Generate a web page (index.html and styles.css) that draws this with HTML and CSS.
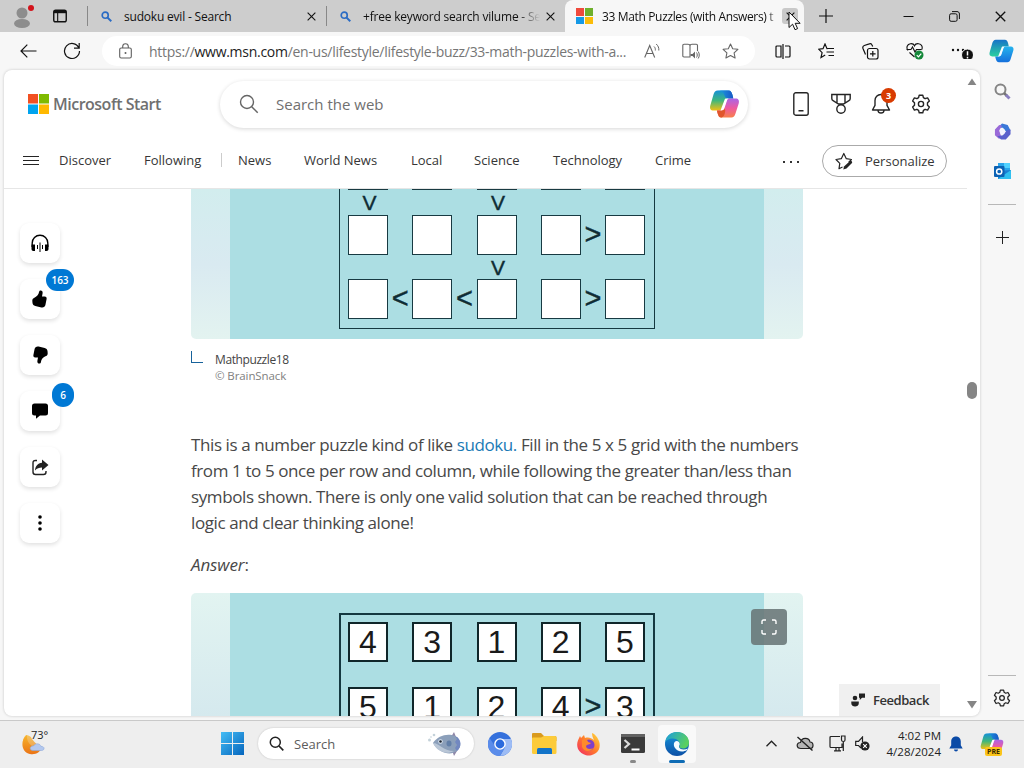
FILE: index.html
```html
<!DOCTYPE html>
<html lang="en">
<head>
    <meta charset="UTF-8">
    <meta name="viewport" content="width=device-width, initial-scale=1.0">
    <title>33 Math Puzzles (with Answers)</title>
    <link rel="stylesheet" href="styles.css">
</head>
<body>

    <svg width="0" height="0" class="defs">
        <defs>
            <linearGradient id="cpTop" x1="0" y1="0" x2="1" y2="0"><stop offset="0" stop-color="#1aa6e0"/><stop offset="1" stop-color="#1a55c8"/></linearGradient>
            <linearGradient id="cpLeft" x1="0" y1="0" x2="0" y2="1"><stop offset="0" stop-color="#1590d8"/><stop offset=".5" stop-color="#3fb77c"/><stop offset="1" stop-color="#f2c014"/></linearGradient>
            <linearGradient id="cpRight" x1="0" y1="0" x2="0" y2="1"><stop offset="0" stop-color="#a965e8"/><stop offset=".5" stop-color="#ee5aa0"/><stop offset="1" stop-color="#f8804a"/></linearGradient>
            <linearGradient id="cbLeft" x1="0" y1="0" x2="0" y2="1"><stop offset="0" stop-color="#1672c8"/><stop offset="1" stop-color="#2bd0a0"/></linearGradient>
            <linearGradient id="cbRight" x1="0" y1="0" x2="0" y2="1"><stop offset="0" stop-color="#25b4ee"/><stop offset="1" stop-color="#1570dc"/></linearGradient>
            <linearGradient id="win" x1="0" y1="0" x2="1" y2="1"><stop offset="0" stop-color="#45bdf5"/><stop offset="1" stop-color="#0565bd"/></linearGradient>
            <linearGradient id="edgeA" x1="0" y1="0" x2="1" y2=".4"><stop offset="0" stop-color="#1a9ce0"/><stop offset="1" stop-color="#5ad060"/></linearGradient>
            <linearGradient id="edgeB" x1="0" y1="0" x2="0" y2="1"><stop offset="0" stop-color="#1697dd"/><stop offset="1" stop-color="#0c4fa5"/></linearGradient>
            <linearGradient id="fox" x1="1" y1="0" x2="0" y2="1"><stop offset="0" stop-color="#ffe03c"/><stop offset=".5" stop-color="#ff7a2c"/><stop offset="1" stop-color="#f0246a"/></linearGradient>
            <linearGradient id="moon" x1="0" y1="0" x2="0" y2="1"><stop offset="0" stop-color="#f8b62c"/><stop offset="1" stop-color="#ea7416"/></linearGradient>
            <symbol id="copilot" viewBox="0 0 30 28">
                <path d="M8 .5h11c2.500 0 3 1.500 4 4.500l.8 3.500H19c-2 0-3 1-3.600 3L13 18.500c-.6 1.500-1.500 2-3 2H4c-3 0-4-2-3.200-5L4 4.500c.8-2.500 2-4 4-4z" fill="url(#cpLeft)"/>
                <path d="M8 .5h11c2.500 0 3 1.500 4 4.500l.8 3.500H19c-2.500 0-3.500-1-4.200-3.500C14 2 12 .5 8 .5z" fill="url(#cpTop)"/>
                <path d="M22 27.500H12c-2.500 0-3-1.500-4-4.500l-.6-2.500H11c2 0 3-1 3.600-3L17 10.500c.6-1.500 1.500-2 3-2h6c3 0 4 2 3.200 5L26 23.500c-.8 2.500-2 4-4 4z" fill="url(#cpRight)"/>
                <path d="M7.400 20.500H11c2 0 3-1 3.600-3l1.200 3c-.5 5-2.500 7-4 7-2.300 0-2.800-1.500-3.800-4.500z" fill="#e0562c"/>
                <path d="M16.500 8.500h4c-2 0-2.500.5-3 2l-2.500 7.500c-.6 1.800-1.500 2.500-3.500 2.500H11l4-10.500c.3-1 .7-1.500 1.500-1.500z" fill="#fff"/>
            </symbol>
            <symbol id="copilotBlue" viewBox="0 0 30 28">
                <path d="M8 .5h11c2.500 0 3 1.500 4 4.500l.8 3.500H19c-2 0-3 1-3.600 3L13 18.500c-.6 1.500-1.500 2-3 2H4c-3 0-4-2-3.200-5L4 4.500c.8-2.500 2-4 4-4z" fill="url(#cbLeft)"/>
                <path d="M22 27.500H12c-2.500 0-3-1.500-4-4.500l-.6-2.500H11c2 0 3-1 3.600-3L17 10.500c.6-1.500 1.500-2 3-2h6c3 0 4 2 3.200 5L26 23.500c-.8 2.500-2 4-4 4z" fill="url(#cbRight)"/>
                <path d="M16.500 8.500h4c-2 0-2.500.5-3 2l-2.500 7.500c-.6 1.800-1.500 2.500-3.500 2.500H11l4-10.500c.3-1 .7-1.500 1.500-1.500z" fill="#f4fbff"/>
            </symbol>
            <symbol id="lens" viewBox="0 0 12 12"><circle cx="4.600" cy="4.600" r="3.300" fill="none" stroke="#2b6cc4" stroke-width="1.800"/><path d="M7.200 7.200l4 4" stroke="#2b6cc4" stroke-width="2.200"/></symbol>
            <symbol id="x" viewBox="0 0 10 10"><path d="M.7.7l8.600 8.600M9.300.7L.7 9.300" stroke="#111" stroke-width="1.200"/></symbol>
            <symbol id="gear" viewBox="0 0 20 20">
                <path d="M8.200 1.200h3.600l.6 2.500 1.700 1 2.500-.8 1.800 3.100-1.900 1.800v2.400l1.900 1.800-1.800 3.100-2.500-.8-1.700 1-.6 2.500H8.200l-.6-2.500-1.700-1-2.500.8L1.600 13l1.900-1.800V8.800L1.600 7l1.800-3.100 2.500.8 1.700-1z" fill="none" stroke="currentColor" stroke-width="1.400" stroke-linejoin="round"/>
                <circle cx="10" cy="10" r="2.600" fill="none" stroke="currentColor" stroke-width="1.400"/>
            </symbol>
            <symbol id="thumb" viewBox="0 0 16 18"><path d="M8.600.4c1.600 0 2.300 1.200 2 2.900L10 6.500h2.700c1.500 0 2.200 1 1.900 2.500l-1.200 6c-.4 1.900-2 2.800-4 2.400L3.300 16C1.700 15.600.7 14.600.5 13L.3 10.800c0-1.500.5-2.400 1.700-2.900 2.800-1.200 4.600-3 5.200-6.300C7.300.9 7.800.4 8.600.4z"/></symbol>
        </defs>
    </svg>

    <!-- Tab strip -->
    <div class="tabstrip">
        <div class="strip-left">
            <svg class="profile" width="22" height="28" viewBox="0 0 22 28"><circle cx="9" cy="11" r="5.500" fill="#8d8d8d"/><ellipse cx="9" cy="21.500" rx="8" ry="4.500" fill="#8d8d8d"/><circle cx="18" cy="6" r="3" fill="#d3141c"/></svg>
            <svg width="14" height="14" viewBox="0 0 15 14"><rect x=".8" y=".8" width="13.400" height="12.400" rx="2" fill="none" stroke="#111" stroke-width="1.500"/><path d="M1 1h13v3H1z" fill="#111"/><path d="M5 3v10" stroke="#111" stroke-width="1.200"/></svg>
        </div>
        <div class="tab tab-one">
            <svg class="tab-icon" width="11" height="11"><use href="#lens"/></svg>
            <span class="tab-title">sudoku evil - Search</span>
            <svg width="9" height="9"><use href="#x"/></svg>
        </div>
        <div class="tab tab-two">
            <svg class="tab-icon" width="11" height="11"><use href="#lens"/></svg>
            <span class="tab-title fade">+free keyword search vilume - Se</span>
            <svg width="9" height="9"><use href="#x"/></svg>
        </div>
        <div class="tab active">
            <svg width="17" height="16" viewBox="0 0 17 16"><path d="M0 0h8v8H0z" fill="#ef4a3c"/><path d="M9 0h8v8H9z" fill="#6fb02c"/><path d="M0 9h8v7H0z" fill="#1599e6"/><path d="M9 9h8v7H9z" fill="#fbbc09"/></svg>
            <span class="tab-title fade">33 Math Puzzles (with Answers) t</span>
            <span class="close-hover"><svg width="9" height="9"><use href="#x"/></svg></span>
        </div>
        <svg class="new-tab" width="14" height="14" viewBox="0 0 14 14"><path d="M7 0v14M0 7h14" stroke="#111" stroke-width="1.200"/></svg>
        <div class="window-buttons">
            <svg width="11" height="11" viewBox="0 0 11 11"><path d="M.5 5.500h10" stroke="#111"/></svg>
            <svg width="11" height="11" viewBox="0 0 11 11"><rect x=".6" y="2.800" width="7.500" height="7.500" rx="1.500" fill="none" stroke="#111"/><path d="M3 .6h5c1.500 0 2.400.9 2.400 2.400v5" fill="none" stroke="#111"/></svg>
            <svg width="11" height="11"><use href="#x"/></svg>
        </div>
    </div>

    <!-- Toolbar -->
    <div class="toolbar">
        <svg class="back" width="17" height="14" viewBox="0 0 17 14"><path d="M16.500 7H1M7.300.7L1 7l6.300 6.300" fill="none" stroke="#111" stroke-width="1.200"/></svg>
        <svg class="reload" width="18" height="18" viewBox="0 0 18 18"><path d="M15.800 5.800A7.500 7.500 0 1 0 16.500 9M16.200 1v5.200H11" fill="none" stroke="#111" stroke-width="1.200"/></svg>
        <div class="address">
            <svg class="lock" width="13" height="16" viewBox="0 0 13 16"><rect x=".7" y="5" width="11.600" height="10" rx="1.500" fill="none" stroke="#5f5f5f" stroke-width="1.100"/><path d="M3.700 5V3.500a2.800 2.800 0 0 1 5.600 0V5" fill="none" stroke="#5f5f5f" stroke-width="1.100"/><circle cx="6.500" cy="10" r="1" fill="#5f5f5f"/></svg>
            <span class="url">https://<b>www.msn.com</b>/en-us/lifestyle/lifestyle-buzz/33-math-puzzles-with-a...</span>
            <svg width="16" height="16" viewBox="0 0 16 16"><path d="M.7 14.500L5.700 2.500l5 12M2.400 10.500H9" fill="none" stroke="#666" stroke-width="1.100"/><path d="M10 3.500c1.200 1 1.500 2.500 1.300 4M12.200 1c2 1.800 2.900 4 2.600 6.500" fill="none" stroke="#666"/></svg>
            <svg width="18" height="16" viewBox="0 0 18 16"><path d="M8 14H2c-.8 0-1.200-.4-1.200-1.200V2.500c0-.8.4-1.200 1.200-1.200h4c1.200 0 2 .6 2 1.700V14zM8 3c0-1.100.8-1.700 2-1.700h4.300c.8 0 1.200.4 1.200 1.200V8" fill="none" stroke="#666" stroke-width="1.100"/><path d="M8.500 11h2l2.500-2.500v7L10.500 13h-2z" fill="#666"/><path d="M14.500 9.500c1 1.500 1 3.500 0 5M16.200 8.500c1.400 2 1.400 5 0 7" fill="none" stroke="#666"/></svg>
            <svg width="17" height="16" viewBox="0 0 17 16"><path d="M8.500 1l2.200 4.700 5.200.6-3.800 3.600 1 5.100-4.600-2.500L3.900 15l1-5.100L1.100 6.300l5.200-.6z" fill="none" stroke="#666" stroke-width="1.100" stroke-linejoin="round"/></svg>
        </div>
        <div class="tools">
            <svg width="16" height="15" viewBox="0 0 16 15"><path d="M6 2H2Q1 2 1 3v9q0 1 1 1h4zM10 2h4q1 0 1 1v9q0 1-1 1h-4M8 0v15" fill="none" stroke="#111" stroke-width="1.200"/></svg>
            <svg width="17" height="16" viewBox="0 0 17 16"><path d="M9.500 5.700H9L7 1 5 5.700l-4.300.5 3.400 3.400L3 14.500l4.200-2.400M9.500 5.500H16M8.500 9H16M10.500 12.500H16" fill="none" stroke="#111" stroke-width="1.200"/></svg>
            <svg width="17" height="17" viewBox="0 0 17 17"><rect x="5.500" y="5.500" width="10.500" height="10.500" rx="2" fill="none" stroke="#111" stroke-width="1.200"/><path d="M3.500 11.500L1 5.500C.5 4 1 3 2.300 2.500l5-1.600c1.300-.5 2.300 0 2.700 1l.7 1.600M10.800 8v5.600M8 10.800h5.600" fill="none" stroke="#111" stroke-width="1.200"/></svg>
            <svg width="18" height="18" viewBox="0 0 18 18"><path d="M2 8.500C0 6 1 2 4.500 1.700 6.500 1.500 8 2.500 8.500 3.800 9 2.500 10.500 1.500 12.500 1.700 16 2 17 5.500 15.500 8M3.500 10.500l5 4.500M.5 7.500H5l1.500-2.500L9 10l1.500-2.500H15" fill="none" stroke="#111" stroke-width="1.100"/><circle cx="13" cy="13" r="4.500" fill="#15883a"/><path d="M10.800 13.200l1.600 1.600 2.900-3.200" fill="none" stroke="#fff" stroke-width="1.200"/></svg>
            <svg width="22" height="16" viewBox="0 0 22 16"><g fill="#111"><circle cx="2" cy="7" r="1.200"/><circle cx="7" cy="7" r="1.200"/><circle cx="12" cy="7" r="1.200"/></g><circle cx="16.500" cy="12" r="6" fill="#111" stroke="#f7f7f7"/><path d="M16.500 8.300v4.200M16.500 13.800v1.600" stroke="#fff" stroke-width="1.500"/></svg>
        </div>
        <svg class="copilot-btn" width="25" height="24"><use href="#copilotBlue"/></svg>
    </div>

    <div class="main">
        <!-- Page -->
        <div class="page">
            <header class="header">
                <div class="header-top">
                    <div class="logo">
                        <svg width="21" height="20" viewBox="0 0 21 20"><path d="M0 0h10v9.500H0z" fill="#f25022"/><path d="M11 0h10v9.500H11z" fill="#7fba00"/><path d="M0 10.500h10V20H0z" fill="#00a4ef"/><path d="M11 10.500h10V20H11z" fill="#ffb900"/></svg>
                        <span>Microsoft Start</span>
                    </div>
                    <div class="search">
                        <svg width="20" height="20" viewBox="0 0 20 20"><circle cx="8" cy="8" r="6.500" fill="none" stroke="#666" stroke-width="1.400"/><path d="M12.700 12.700l6 6" stroke="#666" stroke-width="1.500"/></svg>
                        <span>Search the web</span>
                        <svg width="31" height="28"><use href="#copilot"/></svg>
                    </div>
                    <div class="header-icons">
                        <svg width="16" height="24" viewBox="0 0 16 24"><rect x=".8" y=".8" width="14.400" height="22.400" rx="2" fill="none" stroke="#242424" stroke-width="1.400"/><path d="M5.500 18.800h5" stroke="#242424" stroke-width="1.400"/></svg>
                        <svg width="20" height="22" viewBox="0 0 20 22"><path d="M.8 1.500h18.400v4c0 1-.4 1.700-1.300 2.200L12.500 11h-5L2.100 7.700C1.200 7.200.8 6.500.8 5.500zM6 1.500v8M14 1.500v8" fill="none" stroke="#242424" stroke-width="1.400"/><circle cx="10" cy="16" r="4.200" fill="none" stroke="#242424" stroke-width="1.400"/></svg>
                        <div class="bell">
                            <svg width="20" height="22" viewBox="0 0 20 22"><path d="M10 1.500c-3.600 0-6 2.600-6 6v4.800L1.500 17h17L16 12.300V7.500c0-3.400-2.400-6-6-6zM7 17.500c.4 3.400 5.600 3.400 6 0" fill="none" stroke="#242424" stroke-width="1.400" stroke-linejoin="round"/></svg>
                            <span class="bell-count">3</span>
                        </div>
                        <svg width="20" height="20"><use href="#gear"/></svg>
                    </div>
                </div>
                <nav class="nav">
                    <svg width="16" height="10" viewBox="0 0 16 10"><path d="M0 .5h16M0 4.500h16M0 8.500h16" stroke="#242424"/></svg>
                    <a class="n-discover">Discover</a>
                    <a class="n-following">Following</a>
                    <a class="n-news">News</a>
                    <a class="n-world">World News</a>
                    <a class="n-local">Local</a>
                    <a class="n-science">Science</a>
                    <a class="n-tech">Technology</a>
                    <a class="n-crime">Crime</a>
                    <svg class="more" width="16" height="4" viewBox="0 0 16 4"><path d="M0 2h2v2H0zM7 2h2v2H7zM14 2h2v2h-2z" fill="#333"/></svg>
                    <div class="personalize">
                        <svg width="19" height="18" viewBox="0 0 19 18"><path d="M7.500 15L4 16.700l.8-5.300L1 7.500l5.300-.8L8.800 1.500l2.500 5.200 5.200.8-2.800 2.700" fill="none" stroke="#242424" stroke-width="1.200" stroke-linejoin="round"/><path d="M9 14.500l6-5.500c1-.8 2.800.8 2 2l-5.500 5.500-3.200 1z" fill="#242424"/></svg>
                        <span>Personalize</span>
                    </div>
                </nav>
            </header>

            <div class="content">
                <div class="actions">
                    <div class="action"><svg width="18" height="18" viewBox="0 0 18 18"><path d="M1.200 13V9a7.800 7.800 0 0 1 15.600 0v4" fill="none" stroke="#000" stroke-width="1.400"/><path d="M.5 10.500H4V17H2.500C1.200 17 .5 16.300.5 15zM17.500 10.500H14V17h1.500c1.300 0 2-.7 2-2zM6 11h1v4H6zM8.500 8.500h1V18h-1zM11 11h1v4h-1z"/></svg></div>
                    <div class="action"><svg width="16" height="18"><use href="#thumb"/></svg><span class="badge">163</span></div>
                    <div class="action"><svg class="down" width="16" height="18"><use href="#thumb"/></svg></div>
                    <div class="action"><svg width="16" height="16" viewBox="0 0 16 16"><path d="M2.500.5h11A2.500 2.500 0 0 1 16 3v7a2.500 2.500 0 0 1-2.500 2.500H8L4 15.800v-3.300H2.500A2.500 2.500 0 0 1 0 10V3A2.500 2.500 0 0 1 2.500.500z"/></svg><span class="badge round">6</span></div>
                    <div class="action"><svg width="18" height="17" viewBox="0 0 18 17"><path d="M6 1.500H4.500Q2 1.500 2 4v9q0 2.500 2.500 2.500h8Q15 15.500 15 13v-1" fill="none" stroke="#222" stroke-width="1.400"/><path d="M11 .5L17.500 6 11 11.500V8.500c-3 0-5 .7-7 3 .3-4.300 2.700-7.500 7-7.800z" fill="#222"/></svg></div>
                    <div class="action"><svg width="4" height="16" viewBox="0 0 4 16"><circle cx="2" cy="2" r="1.800"/><circle cx="2" cy="8" r="1.800"/><circle cx="2" cy="14" r="1.800"/></svg></div>
                </div>

                <article class="article">
                    <figure class="picture picture-one">
                        <div class="picture-inner">
                            <div class="puzzle">
                                <i></i><i></i><i></i><i></i><i></i>
                                <b class="v c1">V</b><b class="v c3">V</b>
                                <i></i><i></i><i></i><i></i><i></i>
                                <b class="v c3 r4">V</b>
                                <i></i><i></i><i></i><i></i><i></i>
                                <b class="g1">&gt;</b><b class="l1">&lt;</b><b class="l2">&lt;</b><b class="g2">&gt;</b>
                            </div>
                        </div>
                    </figure>
                    <div class="caption">
                        <span class="corner"></span>
                        <div>
                            <p class="caption-title">Mathpuzzle18</p>
                            <p class="caption-credit">© BrainSnack</p>
                        </div>
                    </div>
                    <p class="text">This is a number puzzle kind of like <a>sudoku.</a> Fill in the 5 x 5 grid with the numbers<br>from 1 to 5 once per row and column, while following the greater than/less than<br>symbols shown. There is only one valid solution that can be reached through<br>logic and clear thinking alone!</p>
                    <p class="text answer"><em>Answer</em>:</p>
                    <figure class="picture picture-two">
                        <div class="picture-inner">
                            <div class="puzzle solved">
                                <i>4</i><i>3</i><i>1</i><i>2</i><i>5</i>
                                <i>5</i><i>1</i><i>2</i><i>4</i><b class="g1">&gt;</b><i>3</i>
                            </div>
                        </div>
                        <span class="expand"><svg width="16" height="16" viewBox="0 0 16 16"><path d="M1 5V2.500Q1 1 2.500 1H5M11 1h2.500Q15 1 15 2.500V5M15 11v2.500q0 1.500-1.500 1.500H11M5 15H2.500Q1 15 1 13.500V11" fill="none" stroke="#fff" stroke-width="1.400"/></svg></span>
                    </figure>
                </article>
            </div>

            <div class="scrollbar">
                <svg width="10" height="7" viewBox="0 0 10 8"><path d="M5 .5L10 8H0z" fill="#858585"/></svg>
                <span class="thumb"></span>
                <svg width="10" height="8" viewBox="0 0 10 8"><path d="M5 7.500L0 0h10z" fill="#858585"/></svg>
            </div>

            <div class="feedback">
                <svg width="14" height="14" viewBox="0 0 14 14" fill="#222"><circle cx="4" cy="5" r="2.300"/><path d="M.3 8.500h7.500v1.700c0 4.400-7.500 4.400-7.500 0zM8 .5h6v4.300h-3L8.800 7V4.800H8z"/></svg>
                <span>Feedback</span>
            </div>
        </div>

        <!-- Sidebar -->
        <aside class="sidebar">
            <svg width="17" height="17" viewBox="0 0 17 17"><circle cx="6.500" cy="6.500" r="5" fill="none" stroke="#858585" stroke-width="2"/><path d="M10 10l3 3" stroke="#777" stroke-width="2.500"/><path d="M12 12l3.500 3.500" stroke="#8a7fc0" stroke-width="3"/></svg>
            <svg width="17" height="17" viewBox="0 0 17 18"><path d="M8 .5l6 1.500 3 6-4 2-4-5H5L1.500 7z" fill="#3a78d8"/><path d="M5 2L.5 7v6L5 17l2-3-2-6 3-5z" fill="#9a6ad8"/><path d="M3 14l6-1 4-5 4-1v5l-5 5.500H7z" fill="#5a60cc"/><circle cx="8.500" cy="9" r="2.800" fill="#f3f3ff"/></svg>
            <svg width="17" height="17" viewBox="0 0 17 17"><path d="M4 0h12v9H4z" fill="#2aa4ea"/><path d="M10 0h6v5h-6z" fill="#50d2ff"/><path d="M4 8l13-1v9H4z" fill="#1a7fd2"/><path d="M4 16L17 7v9z" fill="#2fc0f0"/><rect y="3" width="10.500" height="11" rx="1" fill="#0b62b4"/><circle cx="5.200" cy="8.500" r="2.600" fill="none" stroke="#fff" stroke-width="1.500"/></svg>
            <span class="side-line"></span>
            <svg width="13" height="13" viewBox="0 0 13 13"><path d="M6.500 0v13M0 6.500h13" stroke="#222"/></svg>
            <div class="side-bottom">
                <span class="side-line"></span>
                <svg width="18" height="18"><use href="#gear"/></svg>
            </div>
        </aside>
    </div>

    <!-- Taskbar -->
    <footer class="taskbar">
        <div class="weather">
            <svg width="26" height="24" viewBox="0 0 26 24"><path d="M6 3C-1 8 0 20 9 22c6 1 10-2 11.500-6C13 17 5 12 6 3z" fill="url(#moon)"/><path d="M5 3c2 0 5 1 6 4 3 4 6 6 8 8-1 4-5 7-9 7C2 20-1 9 5 3z" fill="url(#moon)" opacity=".75"/><path d="M12 18.500c-4 0-3.500-5 .5-4.500 2-3.500 7-2.500 7.500.5 4-.5 4 4 .5 4z" fill="#b4c8ee" stroke="#8da7dc" stroke-width=".6"/></svg>
            <span>73°</span>
        </div>
        <div class="task-center">
            <svg width="23" height="23" viewBox="0 0 23 23"><path d="M0 0h11v11H0zM12 0h11v11H12zM0 12h11v11H0zM12 12h11v11H12z" fill="url(#win)"/></svg>
            <div class="task-search">
                <svg width="15" height="15" viewBox="0 0 15 15"><circle cx="6.300" cy="6.300" r="5" fill="none" stroke="#222" stroke-width="1.500"/><path d="M10 10l4.300 4.300" stroke="#222" stroke-width="1.700"/></svg>
                <span>Search</span>
                <svg width="35" height="24" viewBox="0 0 35 24"><path d="M23 5l3-5 2 5 1 5zM24 18l2 6 3-5 1-4z" fill="#8f87a8"/><path d="M5 11C10 3 20 1 27 4c6 3 7 11 2 15-7 5-18 2-24-8z" fill="#8b9fba"/><path d="M5 11c6 0 10 8 21 8-7 4-17 1-21-8z" fill="#b9c6d6"/><path d="M27 4c7 3 7 11 2 15l-2-3 2-3-2-3 2-3z" fill="#7288c0"/><circle cx="12.500" cy="9.500" r="2.200" fill="#dfe8f2"/><circle cx="12.500" cy="9.500" r="1.300" fill="#1c2430"/><ellipse cx="21" cy="11.500" rx="2.500" ry="3" fill="#627fa8"/><g fill="#c4d2da"><circle cx="1.500" cy="8" r="1.500"/><circle cx="6" cy="3" r="1.300"/><circle cx="3" cy="5" r=".8"/></g></svg>
            </div>
            <svg class="app chromium" width="24" height="24" viewBox="0 0 24 24"><circle cx="12" cy="12" r="12" fill="#3470dc"/><path d="M12 7h11A12 12 0 0 1 12 24l5-9z" fill="#9dbcf5"/><path d="M1.500 6A12 12 0 0 0 12 24l4.500-7.500L7 14z" fill="#5a8cea"/><circle cx="12" cy="12" r="5.800" fill="#fff"/><circle cx="12" cy="12" r="4.400" fill="#2c6bdd"/></svg>
            <svg class="app" width="25" height="22" viewBox="0 0 25 22"><path d="M1 0h8l3 3h11q1.500 0 1.500 1.500V8H0V1q0-1 1-1z" fill="#d99a1e"/><path d="M1 4.500h8L12 3h11q1.500 0 1.500 1.500v15Q24.500 21 23 21H1.500Q0 21 0 19.500v-14q0-1 1-1z" fill="#fccb3a"/><path d="M5 21v-4.500Q5 15 6.500 15h12q1.500 0 1.500 1.500V21z" fill="#1273c8"/></svg>
            <svg class="app firefox" width="24" height="24" viewBox="0 0 24 24"><path d="M15 1c3 1 5 4 6 6 3 5 2 11-2 14a12 12 0 0 1-18-4C-1 12 1 8 3 4l1 2 3-3 1 3c4-1 6 0 9 2-1-2-2-4-2-7z" fill="url(#fox)"/><circle cx="12" cy="13" r="5.500" fill="#8040c8"/><path d="M5 8c3-2 6 0 6 2l3 1c-1 2-4 1-5 3 0 3 4 4 7 2-2 4-9 4-11-1z" fill="#ff8a2a"/></svg>
            <div class="app terminal">
                <svg width="24" height="19" viewBox="0 0 24 19"><rect width="24" height="19" rx="1.500" fill="#3a3a3a"/><path d="M0 0h24v3H0z" fill="#626262"/><path d="M3.500 6l4.500 4-4.500 4" fill="none" stroke="#ddd" stroke-width="2.200"/><path d="M10.500 15.500h8" stroke="#fff" stroke-width="2"/></svg>
                <span></span>
            </div>
            <div class="app edge">
                <svg width="24" height="24" viewBox="0 0 24 24"><circle cx="12" cy="12" r="12" fill="url(#edgeB)"/><path d="M.3 10C1 4 6 0 12 0c7 0 12 5 12 10.500 0 4-3 6-6 6-2.500 0-4-1-3.500-2.500C16 10 12 6.500 8 6.500 4 6.500 1 8.500.3 10z" fill="url(#edgeA)"/><path d="M23 16.500c-4 2-9 1-9-2 0-1 .7-1.300.7-2.500 0-1.500-1.200-3-3-3-3 0-3.500 4-2 6.500 2.500 4.500 8.500 5 12.300 2.500z" fill="#f4fbff"/></svg>
                <span></span>
            </div>
        </div>
        <div class="tray">
            <svg class="chev" width="11" height="7" viewBox="0 0 11 7"><path d="M.5 6.200l5-5 5 5" fill="none" stroke="#222" stroke-width="1.300"/></svg>
            <svg class="cloud" width="18" height="15" viewBox="0 0 18 15"><path d="M5 12.500C0 12.500 0 6.500 4.500 6.500 5.500 1 13 1 14 6c4 0 4 6.500 0 6.500z" fill="#b5b5b5" stroke="#222" stroke-width="1.200"/><path d="M1.500 1l15 13.500" stroke="#222" stroke-width="1.400"/></svg>
            <svg class="net" width="17" height="17" viewBox="0 0 17 17"><path d="M11 1.500H2Q1 1.500 1 2.500v9q0 1 1 1h11v-4M5 15.800h7M7 13v3M10 13v3M12.500 1h3.500v4q0 1.500-1.700 1.500T12.500 5zM14.300 6.500V16" fill="none" stroke="#222" stroke-width="1.200"/></svg>
            <svg class="sound" width="15" height="15" viewBox="0 0 15 15"><path d="M6 12L3.500 9.500H.7V5.300h2.800L7.500 1v5" fill="none" stroke="#222" stroke-width="1.200"/><circle cx="10" cy="10" r="4.600" fill="#222"/><path d="M8.200 8.200l3.600 3.600M11.800 8.200l-3.600 3.600" stroke="#fff" stroke-width="1.100"/></svg>
            <div class="clock"><span class="time">4:02 PM</span><span>4/28/2024</span></div>
            <svg class="bell-blue" width="14" height="16" viewBox="0 0 14 16"><path d="M7 .5c-3 0-4.800 2.200-4.800 5v3.800L.3 12.500h13.400l-1.900-3.200V5.500C11.800 2.700 10 .5 7 .5zM5 13.500h4c0 2.500-4 2.500-4 0z" fill="#0a4aa6"/></svg>
            <div class="pre"><svg width="24" height="22"><use href="#copilot"/></svg><span>PRE</span></div>
        </div>
    </footer>

    <svg class="cursor" width="13" height="20" viewBox="0 0 13 20"><path d="M1 1v15.500l3.600-3.300L7 18.700l2.600-1.100-2.400-5.300h4.900z" fill="#fff" stroke="#111"/></svg>

</body>
</html>
```
FILE: styles.css
```css
/* Reset */
* {
    margin: 0;
    padding: 0;
    box-sizing: border-box;
}

body {
    width: 1024px;
    height: 768px;
    overflow: hidden;
    display: flex;
    flex-direction: column;
    font-family: "Open Sans", "Noto Sans", sans-serif;
    background-color: #f7f7f7;
    color: #242424;
    font-size: 14px;
}

svg {
    display: block;
    flex-shrink: 0;
}

span, a {
    white-space: nowrap;
}

.defs {
    position: absolute;
}

/* Tab strip */
.tabstrip {
    height: 32px;
    background-color: #cdcdcd;
    display: flex;
    align-items: center;
    font-size: 12px;
    color: #111;
    flex-shrink: 0;
}

.strip-left {
    width: 88px;
    height: 20px;
    border-right: 1px solid #888;
    padding-left: 13px;
    display: flex;
    align-items: center;
    gap: 18px;
}

.tab {
    display: flex;
    align-items: center;
}

.tab-one {
    width: 239px;
    height: 20px;
    border-right: 1px solid #888;
    padding: 0 10px 0 13px;
}

.tab-two {
    width: 238px;
    padding: 0 10px 0 13px;
}

.tab-title {
    flex: 1;
    overflow: hidden;
    margin-left: 12px;
    letter-spacing: -0.2px;
}

.tab-two .tab-title {
    margin-right: 6px;
}

.fade {
    -webkit-mask-image: linear-gradient(to right, #000 88%, transparent);
    mask-image: linear-gradient(to right, #000 88%, transparent);
}

.tab.active {
    width: 239px;
    height: 32px;
    padding: 0 6px 0 11px;
    background-color: #f7f7f7;
    border-radius: 8px 8px 0 0;
}

.active .tab-title {
    margin-left: 9px;
    margin-right: 4px;
    letter-spacing: -0.35px;
}

.active .fade {
    -webkit-mask-image: linear-gradient(to right, #000 94%, transparent);
    mask-image: linear-gradient(to right, #000 94%, transparent);
}

.close-hover {
    width: 16px;
    height: 16px;
    border-radius: 3px;
    background-color: #c9c9c9;
    display: flex;
    align-items: center;
    justify-content: center;
}

.new-tab {
    margin-left: 15px;
}

.window-buttons {
    margin-left: auto;
    padding-right: 18px;
    display: flex;
    gap: 35px;
}

/* Toolbar */
.toolbar {
    height: 38px;
    padding: 0 10px 0 20px;
    display: flex;
    align-items: center;
    flex-shrink: 0;
}

.reload {
    margin-left: 26px;
}

.address {
    width: 653px;
    height: 30px;
    margin-left: 21px;
    padding-left: 17px;
    border-radius: 15px;
    background-color: #fff;
    display: flex;
    align-items: center;
    gap: 22px;
}

.url {
    width: 473px;
    margin-left: -5px;
    font-size: 14px;
    letter-spacing: -0.28px;
    color: #767676;
}

.url b {
    font-weight: normal;
    color: #222;
}

.tools {
    margin-left: 20px;
    display: flex;
    align-items: center;
    gap: 27px;
}

.copilot-btn {
    margin-left: auto;
}

/* Page */
.main {
    height: 650px;
    display: flex;
    flex-shrink: 0;
}

.page {
    position: relative;
    width: 976px;
    height: 646px;
    margin-left: 4px;
    background-color: #fff;
    border-radius: 8px;
    overflow: hidden;
    box-shadow: 0 0 3px rgba(0, 0, 0, 0.2);
}

.header {
    width: 963px;
    height: 119px;
    border-bottom: 1px solid #e6e6e6;
}

.header-top {
    height: 68px;
    padding-left: 24px;
    display: flex;
    align-items: center;
}

.logo {
    width: 192px;
    display: flex;
    align-items: center;
    gap: 4px;
    color: #707070;
    font-size: 16px;
    font-weight: 600;
    letter-spacing: -0.5px;
}

.search {
    width: 528px;
    height: 47px;
    padding: 0 8px 0 19px;
    border-radius: 24px;
    box-shadow: 0 1px 4px rgba(0, 0, 0, 0.16);
    display: flex;
    align-items: center;
    color: #707070;
    font-size: 15px;
}

.search span {
    flex: 1;
    margin-left: 17px;
}

.header-icons {
    margin-left: 45px;
    display: flex;
    align-items: center;
    gap: 20px;
}

.header-icons svg:first-child {
    margin-right: 2px;
}

.bell {
    position: relative;
}

.bell .bell-count {
    position: absolute;
    left: 10px;
    top: -5px;
    width: 15px;
    height: 15px;
    border-radius: 50%;
    background-color: #d83b01;
    color: #fff;
    font-size: 9px;
    font-weight: 700;
    line-height: 15px;
    text-align: center;
}

.bell svg:first-child {
    margin-right: 0;
}

.nav {
    height: 46px;
    padding-left: 19px;
    display: flex;
    align-items: center;
    font-size: 13px;
    color: #363636;
}

.nav a {
    margin-top: -2px;
}

.nav .n-discover { width: 85px; margin-left: 20px; }
.nav .n-following { width: 78px; border-right: 1px solid #ccc; line-height: 14px; }
.nav .n-news { width: 66px; margin-left: 16px; }
.nav .n-world { width: 107px; }
.nav .n-local { width: 63px; }
.nav .n-science { width: 79px; }
.nav .n-tech { width: 102px; }
.nav .n-crime { width: 128px; }

.personalize {
    width: 125px;
    height: 32px;
    margin-left: 23px;
    padding-left: 12px;
    border: 1px solid #aaa;
    border-radius: 16px;
    display: flex;
    align-items: center;
    gap: 11px;
}

/* Content */
.content {
    display: flex;
    height: 527px;
    overflow: hidden;
}

.actions {
    width: 187px;
    padding: 34px 0 0 16px;
    display: flex;
    flex-direction: column;
    gap: 16px;
}

.action {
    position: relative;
    width: 40px;
    height: 40px;
    border-radius: 9px;
    background-color: #fff;
    box-shadow: 0 2px 4px rgba(0, 0, 0, 0.12);
    display: flex;
    align-items: center;
    justify-content: center;
}

.down {
    transform: rotate(180deg);
}

.badge {
    position: absolute;
    left: 26px;
    top: -10px;
    width: 28px;
    height: 22px;
    border-radius: 11px;
    background-color: #0078d4;
    color: #fff;
    font-size: 10px;
    font-weight: 600;
    line-height: 22px;
    text-align: center;
}

.badge.round {
    left: 32px;
    top: -8px;
    width: 22px;
    height: 24px;
    line-height: 24px;
}

.article {
    width: 612px;
}

/* Puzzle pictures */
.picture {
    position: relative;
    width: 612px;
    padding: 0 39px;
    overflow: hidden;
    background: linear-gradient(to bottom, #d2edee, #d9eaf1 50%, #e3f3f0);
}

.picture-one {
    height: 150px;
    border-radius: 0 0 5px 5px;
}

.picture-two {
    height: 124px;
    border-radius: 5px 5px 0 0;
    background: linear-gradient(to bottom, #e2f4f1, #d5e9ee);
}

.picture-inner {
    height: 100%;
    background-color: #acdee3;
    display: flex;
    flex-direction: column;
    align-items: center;
    overflow: hidden;
}

.picture-one .picture-inner {
    justify-content: flex-end;
    padding-bottom: 10px;
}

.picture-two .picture-inner {
    padding-top: 20px;
}

.puzzle {
    width: 316px;
    border: 1px solid #143840;
    border-top: none;
    padding: 0 8px 9px 8px;
    flex-shrink: 0;
    display: grid;
    grid-template-columns: 40px 24.25px 40px 24.25px 40px 24.25px 40px 24.25px 40px;
    grid-template-rows: 40px 24.500px 40px 24.500px 40px;
}

.puzzle i {
    border: 1px solid #183a42;
    background-color: #fff;
    font-style: normal;
    font-family: "Liberation Sans", Arial, sans-serif;
    font-size: 32px;
    line-height: 36px;
    text-align: center;
    color: #1a1a1a;
    grid-row: 1;
}

.puzzle i:nth-of-type(5n+1) { grid-column: 1; }
.puzzle i:nth-of-type(5n+2) { grid-column: 3; }
.puzzle i:nth-of-type(5n+3) { grid-column: 5; }
.puzzle i:nth-of-type(5n+4) { grid-column: 7; }
.puzzle i:nth-of-type(5n) { grid-column: 9; }

.puzzle i:nth-of-type(n+6) { grid-row: 3; }
.puzzle i:nth-of-type(n+11) { grid-row: 5; }

.puzzle b {
    font-family: "Liberation Sans", Arial, sans-serif;
    font-weight: normal;
    font-size: 29px;
    line-height: 38px;
    color: #0f2c34;
    -webkit-text-stroke: 0.4px #0f2c34;
    display: flex;
    justify-content: center;
}

.puzzle .v {
    grid-row: 2;
    font-size: 21px;
    line-height: 26px;
    padding-left: 3px;
}

.puzzle .v.c1 { grid-column: 1; }
.puzzle .v.c3 { grid-column: 5; }
.puzzle .v.r4 { grid-row: 4; }
.puzzle .g1 { grid-area: 3 / 8; }
.puzzle .l1 { grid-area: 5 / 2; }
.puzzle .l2 { grid-area: 5 / 4; }
.puzzle .g2 { grid-area: 5 / 8; }

.puzzle.solved {
    border: 2px solid #143840;
    padding: 7px 7px 8px;
    grid-template-rows: 40px 24.500px 40px;
}

.puzzle.solved i {
    border: 2px solid #10262a;
}

.expand {
    position: absolute;
    left: 560px;
    top: 16px;
    width: 36px;
    height: 36px;
    border-radius: 4px;
    background-color: rgba(102, 115, 117, 0.86);
    display: flex;
    align-items: center;
    justify-content: center;
}

/* Caption and text */
.caption {
    height: 93px;
    padding-top: 12px;
    display: flex;
    gap: 12px;
    font-size: 12px;
    line-height: 16px;
}

.corner {
    width: 12px;
    height: 12px;
    border-left: 1px solid #17629b;
    border-bottom: 1px solid #17629b;
}

.caption-title {
    padding-top: 1px;
    color: #444;
    letter-spacing: -0.4px;
}

.caption-credit {
    color: #808080;
    font-size: 11.500px;
    letter-spacing: -0.1px;
}

.text {
    font-size: 17px;
    line-height: 26px;
    letter-spacing: -0.4px;
    color: #484848;
    white-space: nowrap;
}

.text a {
    color: #1a7ab5;
}

.answer {
    margin: 16px 0 15px;
    letter-spacing: -0.1px;
}

/* Scrollbar */
.scrollbar {
    position: absolute;
    right: 2px;
    top: 8px;
    width: 12px;
    height: 630px;
    display: flex;
    flex-direction: column;
    align-items: center;
}

.thumb {
    width: 10px;
    height: 17px;
    margin: 297px 0 302px;
    border-radius: 5px;
    background-color: #858585;
    flex-shrink: 0;
}

.feedback {
    position: absolute;
    left: 835px;
    bottom: 0;
    width: 101px;
    height: 32px;
    padding-left: 12px;
    background-color: #f0f0f0;
    display: flex;
    align-items: center;
    gap: 8px;
    font-size: 13px;
    font-weight: 600;
    letter-spacing: -0.45px;
    color: #333;
}

/* Sidebar */
.sidebar {
    width: 44px;
    height: 650px;
    padding-top: 13px;
    display: flex;
    flex-direction: column;
    align-items: center;
}

.sidebar > svg + svg {
    margin-top: 23px;
}

.side-line {
    width: 28px;
    height: 1px;
    background-color: #b8b8b8;
}

.sidebar > .side-line {
    margin: 24px 0 26px;
}

.side-bottom {
    margin-top: auto;
    padding-bottom: 13px;
    display: flex;
    flex-direction: column;
    align-items: center;
    gap: 13px;
}

/* Taskbar */
.taskbar {
    height: 48px;
    padding-bottom: 2px;
    background-color: #eee;
    border-top: 1px solid #c9c9c9;
    display: flex;
    align-items: center;
    flex-shrink: 0;
}

.weather {
    width: 221px;
    padding-left: 21px;
    display: flex;
}

.weather span {
    position: relative;
    left: -16px;
    top: -5px;
    font-size: 11px;
}

.task-center {
    display: flex;
    align-items: center;
}

.task-search {
    width: 216px;
    height: 31px;
    margin: 0 14px 0 14px;
    padding: 0 11px 0 11px;
    border-radius: 16px;
    background-color: #fff;
    box-shadow: 0 0 2px rgba(0, 0, 0, 0.2);
    display: flex;
    align-items: center;
    color: #5c5c5c;
}

.task-search span {
    flex: 1;
    margin-left: 10px;
    font-size: 13px;
}

.app {
    margin-right: 20px;
}

.app.terminal,
.app.edge {
    height: 38px;
    display: flex;
    flex-direction: column;
    align-items: center;
    justify-content: flex-end;
    gap: 7px;
}

.terminal span {
    width: 6px;
    height: 3px;
    border-radius: 2px;
    background-color: #888;
}

.app.edge {
    width: 38px;
    margin: 0 0 0 -7px;
    border-radius: 4px;
    background-color: #f9f9f9;
    gap: 4px;
}

.edge span {
    width: 16px;
    height: 3px;
    border-radius: 2px;
    background-color: #0f6cb5;
}

.tray {
    margin-left: auto;
    padding-right: 20px;
    display: flex;
    align-items: center;
}

.cloud { margin-left: 19px; }
.net { margin-left: 15px; }
.sound { margin-left: 9px; }

.clock {
    width: 71px;
    display: flex;
    flex-direction: column;
    align-items: flex-end;
    font-size: 11.500px;
    line-height: 16px;
    color: #222;
}

.bell-blue {
    margin-left: 8px;
}

.pre {
    position: relative;
    margin-left: 17px;
}

.pre span {
    position: absolute;
    left: 5px;
    top: 14px;
    padding: 0 2px;
    border-radius: 2px;
    background-color: #fcc419;
    color: #3a2a00;
    font-size: 7px;
    font-weight: 700;
    line-height: 9px;
}

.cursor {
    position: absolute;
    left: 788px;
    top: 11px;
}
```
